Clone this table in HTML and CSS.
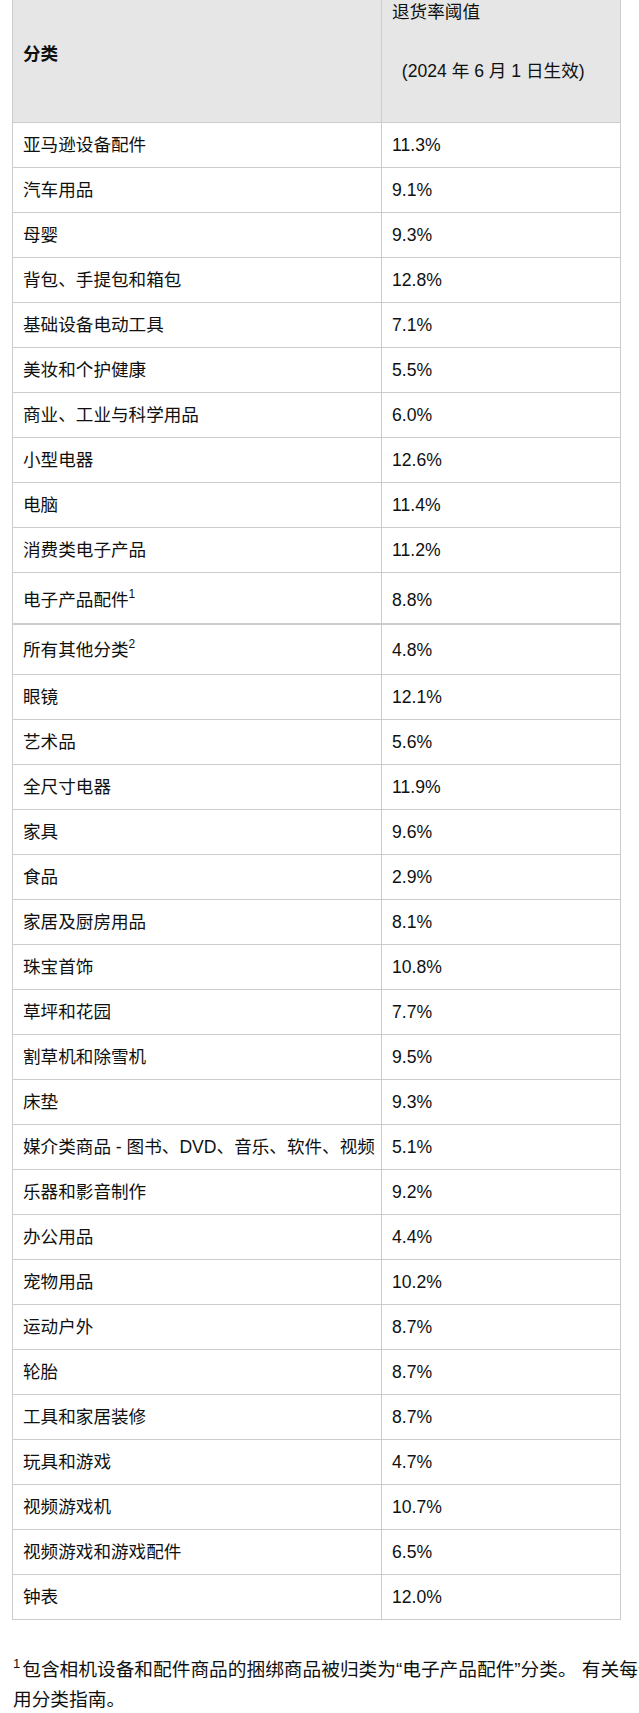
FILE: index.html
```html
<!DOCTYPE html>
<html lang="zh-CN">
<head>
<meta charset="utf-8">
<title>退货率阈值</title>
<link rel="stylesheet" href="styles.css">
</head>
<body>
<div class="page">
  <table class="rates">
    <colgroup>
      <col class="col-cat">
      <col class="col-rate">
    </colgroup>
    <thead>
      <tr>
        <th class="c1 head-cat">分类</th>
        <th class="c2 head-rate">退货率阈值<br><br>&nbsp;&nbsp;(2024 年 6 月 1 日生效)</th>
      </tr>
    </thead>
    <tbody>
      <tr><td class="c1">亚马逊设备配件</td><td class="c2">11.3%</td></tr>
      <tr><td class="c1">汽车用品</td><td class="c2">9.1%</td></tr>
      <tr><td class="c1">母婴</td><td class="c2">9.3%</td></tr>
      <tr><td class="c1">背包、手提包和箱包</td><td class="c2">12.8%</td></tr>
      <tr><td class="c1">基础设备电动工具</td><td class="c2">7.1%</td></tr>
      <tr><td class="c1">美妆和个护健康</td><td class="c2">5.5%</td></tr>
      <tr><td class="c1">商业、工业与科学用品</td><td class="c2">6.0%</td></tr>
      <tr><td class="c1">小型电器</td><td class="c2">12.6%</td></tr>
      <tr><td class="c1">电脑</td><td class="c2">11.4%</td></tr>
      <tr><td class="c1">消费类电子产品</td><td class="c2">11.2%</td></tr>
      <tr class="sup-row split"><td class="c1">电子产品配件<sup>1</sup></td><td class="c2">8.8%</td></tr>
      <tr class="sup-row"><td class="c1">所有其他分类<sup>2</sup></td><td class="c2">4.8%</td></tr>
      <tr><td class="c1">眼镜</td><td class="c2">12.1%</td></tr>
      <tr><td class="c1">艺术品</td><td class="c2">5.6%</td></tr>
      <tr><td class="c1">全尺寸电器</td><td class="c2">11.9%</td></tr>
      <tr><td class="c1">家具</td><td class="c2">9.6%</td></tr>
      <tr><td class="c1">食品</td><td class="c2">2.9%</td></tr>
      <tr><td class="c1">家居及厨房用品</td><td class="c2">8.1%</td></tr>
      <tr><td class="c1">珠宝首饰</td><td class="c2">10.8%</td></tr>
      <tr><td class="c1">草坪和花园</td><td class="c2">7.7%</td></tr>
      <tr><td class="c1">割草机和除雪机</td><td class="c2">9.5%</td></tr>
      <tr><td class="c1">床垫</td><td class="c2">9.3%</td></tr>
      <tr><td class="c1">媒介类商品 - 图书、DVD、音乐、软件、视频</td><td class="c2">5.1%</td></tr>
      <tr><td class="c1">乐器和影音制作</td><td class="c2">9.2%</td></tr>
      <tr><td class="c1">办公用品</td><td class="c2">4.4%</td></tr>
      <tr><td class="c1">宠物用品</td><td class="c2">10.2%</td></tr>
      <tr><td class="c1">运动户外</td><td class="c2">8.7%</td></tr>
      <tr><td class="c1">轮胎</td><td class="c2">8.7%</td></tr>
      <tr><td class="c1">工具和家居装修</td><td class="c2">8.7%</td></tr>
      <tr><td class="c1">玩具和游戏</td><td class="c2">4.7%</td></tr>
      <tr><td class="c1">视频游戏机</td><td class="c2">10.7%</td></tr>
      <tr><td class="c1">视频游戏和游戏配件</td><td class="c2">6.5%</td></tr>
      <tr><td class="c1">钟表</td><td class="c2">12.0%</td></tr>
    </tbody>
  </table>
  <p class="footnote"><sup>1</sup>包含相机设备和配件商品的捆绑商品被归类为“电子产品配件”分类。 有关每个分类的更多信息，请参阅适<br>用分类指南。</p>
</div>
</body>
</html>
```

FILE: styles.css
```css
html {
  overflow: hidden;
}

body {
  margin: 0;
  background: #ffffff;
  color: #0f1111;
  font-family: "Liberation Sans", "Noto Sans CJK SC", sans-serif;
  font-size: 17.6px;
}

.page {
  width: 900px;
  padding-left: 12px;
}

.rates {
  margin-top: -13px;
  width: 609px;
  table-layout: fixed;
  border-collapse: separate;
  border-spacing: 0;
}

.col-cat {
  width: 370px;
}

.col-rate {
  width: 239px;
}

.rates th,
.rates td {
  padding: 10px;
  line-height: 24px;
  text-align: left;
  vertical-align: top;
  white-space: nowrap;
  border-bottom: 1px solid #cccccc;
}

.rates .c1 {
  border-left: 1px solid #cccccc;
  border-right: 1px solid #cccccc;
  padding-right: 2px;
}

.rates .c2 {
  border-right: 1px solid #cccccc;
}

.rates th {
  background: #e6e6e6;
  font-weight: normal;
}

.rates .head-cat {
  font-weight: bold;
  vertical-align: middle;
  line-height: 29.5px;
}

.rates .head-rate {
  line-height: 29.5px;
  padding-top: 11.25px;
  padding-bottom: 35.25px;
}

.rates sup {
  font-size: 12px;
  line-height: 0;
  vertical-align: baseline;
  position: relative;
  top: -8px;
}

.rates .sup-row td {
  padding-top: 13px;
  padding-bottom: 12px;
}

.rates .split td {
  padding-top: 15px;
  padding-bottom: 11px;
  border-bottom-width: 2px;
}

.footnote {
  margin: 35px 0 0 1px;
  font-size: 18.7px;
  line-height: 30px;
  white-space: nowrap;
}

.footnote sup {
  font-size: 13px;
  line-height: 0;
  vertical-align: baseline;
  position: relative;
  top: -8px;
  margin-right: 2px;
}
```
